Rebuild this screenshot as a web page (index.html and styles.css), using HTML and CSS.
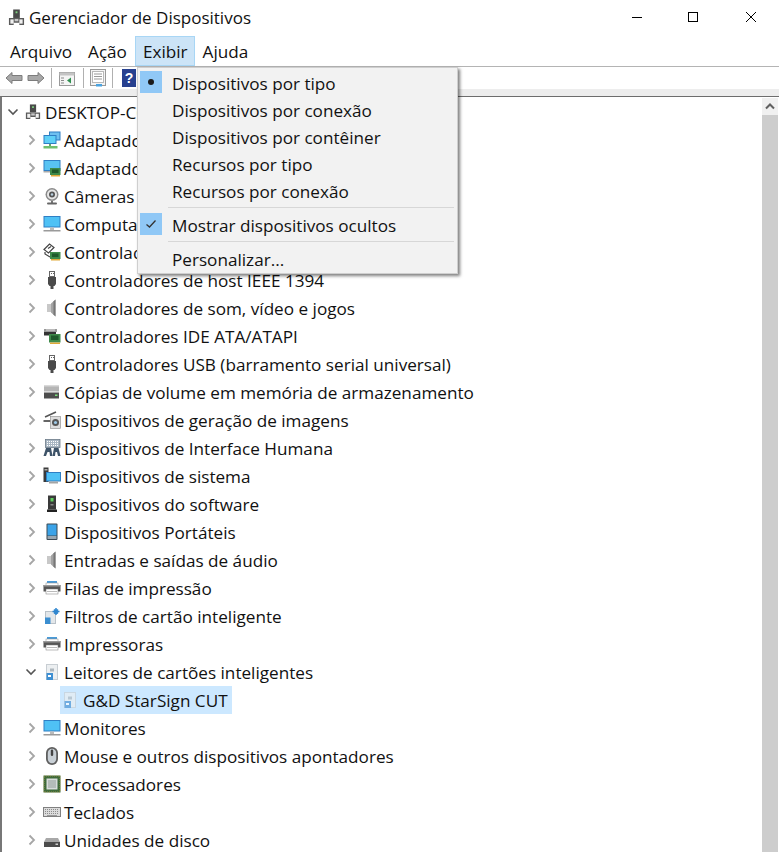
FILE: index.html
```html
<!DOCTYPE html>
<html lang="pt-BR">
<head>
<meta charset="utf-8">
<title>Gerenciador de Dispositivos</title>
<link rel="stylesheet" href="styles.css">
</head>
<body>
<svg class="defs" width="0" height="0" aria-hidden="true">
  <defs>
    <symbol id="i-pc" viewBox="0 0 18 18"><rect x="5.500" y="0.500" width="7" height="9" fill="#4a4a4a"/><rect x="8" y="2.500" width="2" height="2" fill="#7fd07f"/><path d="M1 9.500H17V17H12V14.500H6V17H1Z" fill="#5a5a5a"/><rect x="2.500" y="11" width="3.500" height="4.500" fill="#f0f0f0"/><rect x="12" y="11" width="3.500" height="4.500" fill="#f0f0f0"/><rect x="7" y="10.500" width="4" height="2.500" fill="#c8c8c8"/></symbol>
    <symbol id="i-net" viewBox="0 0 18 18"><rect x="6" y="0.500" width="11.500" height="9" fill="#2f7fc4"/><rect x="7" y="1.500" width="9.500" height="7" fill="#6fc0f0"/><rect x="0.500" y="4" width="13" height="9" fill="#2f7fc4"/><rect x="1.500" y="5" width="11" height="7" fill="#5fd0f7"/><rect x="6" y="13" width="2" height="2" fill="#6aa86a"/><rect x="0.500" y="15" width="14" height="2.500" fill="#6fbf6f"/></symbol>
    <symbol id="i-video" viewBox="0 0 18 18"><rect x="0.500" y="1" width="17" height="11" fill="#2f7fc4"/><rect x="1.500" y="2" width="15" height="9" fill="#58c3f2"/><rect x="0.500" y="12" width="9" height="1.500" fill="#aaa"/><rect x="7" y="9" width="10.500" height="7" fill="#3f8a4a"/><rect x="9" y="10.500" width="6.500" height="3.500" fill="#1f5a2b"/><rect x="8" y="16" width="9" height="1.500" fill="#e0a93a"/></symbol>
    <symbol id="i-cam" viewBox="0 0 18 18"><circle cx="9" cy="7.500" r="6.500" fill="#8a8a8a"/><circle cx="9" cy="7.500" r="5" fill="#e6e6e6"/><circle cx="9" cy="7.500" r="3" fill="#555"/><circle cx="9" cy="7.500" r="1.200" fill="#b8d0e0"/><rect x="8" y="14" width="2" height="2" fill="#777"/><rect x="4" y="15.500" width="10" height="2" rx="1" fill="#666"/></symbol>
    <symbol id="i-mon" viewBox="0 0 18 18"><rect x="0.500" y="1" width="17" height="11.500" fill="#2f7fc4"/><rect x="1.500" y="2" width="15" height="9.500" fill="#4fc1f5"/><rect x="7" y="12.500" width="4" height="2.500" fill="#bbb"/><rect x="0.500" y="15" width="17" height="1.500" fill="#9a9a9a"/></symbol>
    <symbol id="i-stor" viewBox="0 0 18 18"><path d="M1 6.500 L6.500 1 L11 4.500 L5.500 10Z" fill="#fff" stroke="#444" stroke-width="1.200"/><path d="M2 9 L2 11 L7 14 M5 5.500 L8 3.500" fill="none" stroke="#444" stroke-width="1.200"/><rect x="7" y="9" width="10.500" height="7" fill="#3f8a4a"/><rect x="9" y="10.500" width="6.500" height="3.500" fill="#1f5a2b"/><rect x="8" y="16" width="9" height="1.500" fill="#e0a93a"/></symbol>
    <symbol id="i-usb" viewBox="0 0 18 18"><rect x="6.500" y="0.500" width="5" height="5" fill="#fff" stroke="#666"/><rect x="8" y="2" width="1" height="1" fill="#666"/><rect x="10" y="2" width="1" height="1" fill="#666"/><path d="M5 6H13V13L11.500 15H10.500V18H7.500V15H6.500L5 13Z" fill="#4a4a4a"/></symbol>
    <symbol id="i-snd" viewBox="0 0 18 18"><rect x="4" y="5" width="4" height="8" fill="#c8c8c8"/><path d="M8 4.500 L12.500 0.500 V17.500 L8 13.500Z" fill="#a4a4a4"/><path d="M10.500 2.500 L12.500 0.500 V17.500 L10.500 15.500Z" fill="#777"/></symbol>
    <symbol id="i-ide" viewBox="0 0 18 18"><path d="M1 2H14V5H1Z" fill="#999"/><path d="M1 5H13V8.500H1Z" fill="#333"/><rect x="3" y="2.500" width="9" height="1" fill="#ddd"/><rect x="6" y="7" width="11.500" height="8.500" fill="#3f8a4a"/><rect x="8" y="8.500" width="7.500" height="4.500" fill="#1f5a2b"/><rect x="7" y="15.500" width="10" height="1.500" fill="#e0a93a"/></symbol>
    <symbol id="i-vol" viewBox="0 0 18 18"><rect x="1" y="2.500" width="15" height="6" fill="#b5b5b5"/><rect x="1" y="2.500" width="15" height="1" fill="#d8d8d8"/><rect x="1" y="9.500" width="15" height="6" fill="#4d4d4d"/><rect x="12" y="11.500" width="2.500" height="1.500" fill="#7be07b"/></symbol>
    <symbol id="i-img" viewBox="0 0 18 18"><path d="M2 6 L13 1" stroke="#555" stroke-width="1.600"/><rect x="0.500" y="9" width="7" height="2" fill="#666"/><rect x="7.500" y="5.500" width="10" height="12" fill="#ddd" stroke="#888" stroke-width="0.600"/><circle cx="12.500" cy="11.500" r="3.500" fill="#555"/><circle cx="12.500" cy="11.500" r="1.600" fill="#9cc8e6"/></symbol>
    <symbol id="i-hid" viewBox="0 0 18 18"><rect x="2.500" y="0.500" width="14.500" height="8" fill="#a9b6c2" stroke="#6b7a88" stroke-width="0.800"/><path d="M4 2.500H16M4 4.500H16M4 6.500H16" stroke="#fff" stroke-dasharray="1 1"/><path d="M0.500 17 L3 9 H8 L9.500 17 H7 L6.500 13 H4.500 L3 17Z" fill="#3e5368"/><path d="M9.500 17 L11 9 H15.500 L17.500 17 H15 L14 13 H12.500 L12 17Z" fill="#3e5368"/></symbol>
    <symbol id="i-sys" viewBox="0 0 18 18"><rect x="0.500" y="0.500" width="5" height="14.500" fill="#3a3a3a"/><rect x="1.500" y="2" width="3" height="1.500" fill="#aaa"/><rect x="3" y="5" width="15" height="9.500" fill="#2f7fc4"/><rect x="4" y="6" width="13" height="7.500" fill="#4fc1f5"/><rect x="6" y="14.500" width="9" height="2" fill="#a5a5a5"/></symbol>
    <symbol id="i-soft" viewBox="0 0 18 18"><rect x="5" y="0.500" width="8" height="14" fill="#3a3a3a"/><rect x="7.500" y="3" width="3" height="3.500" fill="#5fcf5f"/><rect x="7.500" y="9" width="3" height="1.500" fill="#888"/><rect x="4" y="14.500" width="10" height="2.500" fill="#222"/></symbol>
    <symbol id="i-port" viewBox="0 0 18 18"><rect x="3.500" y="0.500" width="11" height="16.500" rx="1" fill="#3c4a55"/><rect x="4.500" y="1.500" width="9" height="11" fill="#3ba3e8"/><rect x="4.500" y="13" width="9" height="3" fill="#98a6b0"/></symbol>
    <symbol id="i-prn" viewBox="0 0 18 18"><rect x="4" y="2" width="10" height="2" fill="#4a9bd8"/><rect x="3" y="4" width="12" height="3" fill="#fff" stroke="#888" stroke-width="0.500"/><rect x="0.500" y="6" width="17" height="6.500" fill="#555"/><rect x="0.500" y="6" width="17" height="1.500" fill="#999"/><rect x="3" y="10" width="12" height="5" fill="#fff" stroke="#777" stroke-width="0.500"/><rect x="4" y="12" width="10" height="1" fill="#bbb"/></symbol>
    <symbol id="i-filt" viewBox="0 0 18 18"><rect x="2" y="4" width="11" height="13" fill="#b9c1c8"/><rect x="3" y="5" width="9" height="11" fill="#e3e7ea"/><rect x="2" y="10.500" width="5.500" height="6.500" fill="#3b8ed0"/><path d="M13 1V8M9.500 4.500H16.500M11 2.500L15 6.500M15 2.500L11 6.500" stroke="#2f86cf" stroke-width="1.500"/></symbol>
    <symbol id="i-card" viewBox="0 0 18 18"><rect x="3" y="1" width="12" height="16" fill="#c8ced3"/><rect x="4" y="2" width="10" height="14" fill="#eceff1"/><rect x="7" y="5.500" width="4" height="3" fill="#aeb7be"/><rect x="3.500" y="10" width="6.500" height="7" fill="#3f8fd2"/><rect x="5" y="12" width="3" height="2" fill="#fff"/></symbol>
    <symbol id="i-mouse" viewBox="0 0 18 18"><rect x="3" y="0" width="12" height="18" rx="6" fill="#5f5f5f"/><rect x="4.800" y="1.800" width="8.400" height="14.400" rx="4.200" fill="#c9d0d6"/><rect x="7.800" y="2.500" width="2.400" height="6.500" rx="1.200" fill="#444"/></symbol>
    <symbol id="i-cpu" viewBox="0 0 18 18"><rect x="0.500" y="0.500" width="17" height="17" fill="#3f6b3a"/><rect x="1" y="1" width="16" height="16" fill="none" stroke="#c8a550" stroke-dasharray="1 1" stroke-width="0.600"/><rect x="3.500" y="3.500" width="11" height="11" fill="#d7dcdb"/><rect x="5" y="5" width="8" height="8" fill="#b4bcb9"/></symbol>
    <symbol id="i-kbd" viewBox="0 0 18 18"><rect x="0.500" y="4.500" width="17" height="9" fill="#dcdcdc" stroke="#808080"/><path d="M2 6.500H16M2 8.500H16M2 10.500H16" stroke="#8c8c8c" stroke-dasharray="1 1"/><rect x="4" y="12" width="10" height="1" fill="#9a9a9a"/></symbol>
    <symbol id="i-disk" viewBox="0 0 18 18"><path d="M3 7H15L17 11H1Z" fill="#a8a8a8"/><rect x="1" y="11" width="16" height="5" fill="#4c4c4c"/><rect x="12.500" y="12.500" width="2.500" height="1.500" fill="#cfcfcf"/></symbol>
    <symbol id="i-chev-r" viewBox="0 0 10 12"><path d="M2.500 1.500L7 6L2.500 10.500" fill="none" stroke="#a6a6a6" stroke-width="1.800"/></symbol>
    <symbol id="i-chev-d" viewBox="0 0 12 10"><path d="M1.500 2.500L6 7L10.500 2.500" fill="none" stroke="#555" stroke-width="1.600"/></symbol>
  </defs>
</svg>

<div class="window">
  <header class="titlebar">
    <svg class="title-icon"><use href="#i-pc"/></svg>
    <span class="title-text">Gerenciador de Dispositivos</span>
    <div class="win-buttons">
      <svg class="win-btn" viewBox="0 0 10 10"><path d="M0 5.500H10" stroke="#000" fill="none"/></svg>
      <svg class="win-btn" viewBox="0 0 10 10"><rect x="0.500" y="0.500" width="9" height="9" stroke="#000" fill="none"/></svg>
      <svg class="win-btn" viewBox="0 0 10 10"><path d="M0 0L10 10M10 0L0 10" stroke="#000" fill="none"/></svg>
    </div>
  </header>

  <nav class="menubar">
    <span class="menu-item">Arquivo</span>
    <span class="menu-item">Ação</span>
    <span class="menu-item is-open">Exibir</span>
    <span class="menu-item">Ajuda</span>
  </nav>

  <div class="toolbar">
    <svg class="tool tool-arrow" viewBox="0 0 18 14"><path d="M1 7L7 1.500V4.500H17V9.500H7V12.500Z" fill="#a8a8a8" stroke="#7c7c7c"/></svg>
    <svg class="tool tool-arrow tool-next" viewBox="0 0 18 14"><path d="M17 7L11 1.500V4.500H1V9.500H11V12.500Z" fill="#a8a8a8" stroke="#7c7c7c"/></svg>
    <span class="tool-sep sep-a"></span>
    <svg class="tool tool-pane" viewBox="0 0 16 14"><rect x="0.500" y="0.500" width="15" height="13" fill="#f4f4f4" stroke="#9a9a9a"/><rect x="0.500" y="0.500" width="15" height="3" fill="#c4c4c4"/><path d="M2 6H5M2 8.500H5M2 11H5" stroke="#8a8a8a"/><path d="M12 5.500V11.500L8 8.500Z" fill="#2f8f4f"/></svg>
    <span class="tool-sep sep-b"></span>
    <svg class="tool tool-sheet" viewBox="0 0 16 18"><rect x="0.500" y="0.500" width="15" height="16" fill="#f4f4f4" stroke="#9a9a9a"/><rect x="2.500" y="2.500" width="11" height="11" fill="#fff" stroke="#b8b8b8"/><path d="M4 5H12M4 7.500H12M4 10H12" stroke="#999"/><rect x="6" y="15" width="6" height="2.500" fill="#4aa3e0"/></svg>
    <span class="tool-sep sep-c"></span>
    <span class="tool-help">?</span>
  </div>

  <div class="content">
    <ul class="tree">
      <li class="row root"><svg class="chev-d"><use href="#i-chev-d"/></svg><svg class="icon"><use href="#i-pc"/></svg><span>DESKTOP-CGH0R1P</span></li>
      <li class="row"><svg class="chev"><use href="#i-chev-r"/></svg><svg class="icon"><use href="#i-net"/></svg><span>Adaptadores de rede</span></li>
      <li class="row"><svg class="chev"><use href="#i-chev-r"/></svg><svg class="icon"><use href="#i-video"/></svg><span>Adaptadores de vídeo</span></li>
      <li class="row"><svg class="chev"><use href="#i-chev-r"/></svg><svg class="icon"><use href="#i-cam"/></svg><span>Câmeras</span></li>
      <li class="row"><svg class="chev"><use href="#i-chev-r"/></svg><svg class="icon"><use href="#i-mon"/></svg><span>Computador</span></li>
      <li class="row"><svg class="chev"><use href="#i-chev-r"/></svg><svg class="icon"><use href="#i-stor"/></svg><span>Controladores de armazenamento</span></li>
      <li class="row"><svg class="chev"><use href="#i-chev-r"/></svg><svg class="icon"><use href="#i-usb"/></svg><span>Controladores de host IEEE 1394</span></li>
      <li class="row"><svg class="chev"><use href="#i-chev-r"/></svg><svg class="icon"><use href="#i-snd"/></svg><span>Controladores de som, vídeo e jogos</span></li>
      <li class="row"><svg class="chev"><use href="#i-chev-r"/></svg><svg class="icon"><use href="#i-ide"/></svg><span>Controladores IDE ATA/ATAPI</span></li>
      <li class="row"><svg class="chev"><use href="#i-chev-r"/></svg><svg class="icon"><use href="#i-usb"/></svg><span>Controladores USB (barramento serial universal)</span></li>
      <li class="row"><svg class="chev"><use href="#i-chev-r"/></svg><svg class="icon"><use href="#i-vol"/></svg><span>Cópias de volume em memória de armazenamento</span></li>
      <li class="row"><svg class="chev"><use href="#i-chev-r"/></svg><svg class="icon"><use href="#i-img"/></svg><span>Dispositivos de geração de imagens</span></li>
      <li class="row"><svg class="chev"><use href="#i-chev-r"/></svg><svg class="icon"><use href="#i-hid"/></svg><span>Dispositivos de Interface Humana</span></li>
      <li class="row"><svg class="chev"><use href="#i-chev-r"/></svg><svg class="icon"><use href="#i-sys"/></svg><span>Dispositivos de sistema</span></li>
      <li class="row"><svg class="chev"><use href="#i-chev-r"/></svg><svg class="icon"><use href="#i-soft"/></svg><span>Dispositivos do software</span></li>
      <li class="row"><svg class="chev"><use href="#i-chev-r"/></svg><svg class="icon"><use href="#i-port"/></svg><span>Dispositivos Portáteis</span></li>
      <li class="row"><svg class="chev"><use href="#i-chev-r"/></svg><svg class="icon"><use href="#i-snd"/></svg><span>Entradas e saídas de áudio</span></li>
      <li class="row"><svg class="chev"><use href="#i-chev-r"/></svg><svg class="icon"><use href="#i-prn"/></svg><span>Filas de impressão</span></li>
      <li class="row"><svg class="chev"><use href="#i-chev-r"/></svg><svg class="icon"><use href="#i-filt"/></svg><span>Filtros de cartão inteligente</span></li>
      <li class="row"><svg class="chev"><use href="#i-chev-r"/></svg><svg class="icon"><use href="#i-prn"/></svg><span>Impressoras</span></li>
      <li class="row"><svg class="chev-d"><use href="#i-chev-d"/></svg><svg class="icon"><use href="#i-card"/></svg><span>Leitores de cartões inteligentes</span></li>
      <li class="row child"><span class="selection"><svg class="icon icon-faded"><use href="#i-card"/></svg><span>G&amp;D StarSign CUT</span></span></li>
      <li class="row"><svg class="chev"><use href="#i-chev-r"/></svg><svg class="icon"><use href="#i-mon"/></svg><span>Monitores</span></li>
      <li class="row"><svg class="chev"><use href="#i-chev-r"/></svg><svg class="icon"><use href="#i-mouse"/></svg><span>Mouse e outros dispositivos apontadores</span></li>
      <li class="row"><svg class="chev"><use href="#i-chev-r"/></svg><svg class="icon"><use href="#i-cpu"/></svg><span>Processadores</span></li>
      <li class="row"><svg class="chev"><use href="#i-chev-r"/></svg><svg class="icon"><use href="#i-kbd"/></svg><span>Teclados</span></li>
      <li class="row"><svg class="chev"><use href="#i-chev-r"/></svg><svg class="icon"><use href="#i-disk"/></svg><span>Unidades de disco</span></li>
    </ul>
    <div class="scrollbar">
      <svg class="scroll-up" viewBox="0 0 10 8"><path d="M1 6L5 2L9 6" fill="none" stroke="#606060" stroke-width="2"/></svg>
      <div class="scroll-thumb"></div>
    </div>
  </div>

  <div class="dropdown">
    <div class="dd-item"><span class="dd-mark"><span class="dd-dot"></span></span>Dispositivos por tipo</div>
    <div class="dd-item"><span class="dd-mark-empty"></span>Dispositivos por conexão</div>
    <div class="dd-item"><span class="dd-mark-empty"></span>Dispositivos por contêiner</div>
    <div class="dd-item"><span class="dd-mark-empty"></span>Recursos por tipo</div>
    <div class="dd-item"><span class="dd-mark-empty"></span>Recursos por conexão</div>
    <div class="dd-sep"></div>
    <div class="dd-item"><span class="dd-mark"><svg class="dd-check" viewBox="0 0 12 10"><path d="M1.500 5.500L4.500 8L10.500 1.500" fill="none" stroke="#333" stroke-width="1.300"/></svg></span>Mostrar dispositivos ocultos</div>
    <div class="dd-sep"></div>
    <div class="dd-item"><span class="dd-mark-empty"></span>Personalizar...</div>
  </div>
</div>
</body>
</html>
```

FILE: styles.css
```css
* { box-sizing: border-box; }
html, body { margin: 0; padding: 0; height: 100%; overflow: hidden; background: #fff; }
body { font-family: "Open Sans", "Noto Sans", sans-serif; font-size: 17.15px; color: #111; }
.defs { position: absolute; }
.window { position: relative; display: flex; flex-direction: column; width: 779px; height: 852px; overflow: hidden; }

.titlebar { display: flex; align-items: center; height: 36px; flex: none; padding: 0 23px 2px 8px; }
.title-icon { width: 17px; height: 17px; margin-right: 4px; }
.title-text { font-size: 17px; }
.win-buttons { margin-left: auto; display: flex; gap: 46px; }
.win-buttons .win-btn:last-child { margin-left: 2px; }
.win-btn { width: 10px; height: 10px; display: block; }

.menubar { display: flex; height: 31px; flex: none; align-items: flex-start; border-bottom: 1px solid #b4b4b4; padding-left: 2px; }
.menu-item { display: flex; align-items: center; padding: 0 7px; border: 1px solid transparent; height: 30px; }
.menu-item.is-open { background: #cce4f7; border-color: #a8d6f5; padding-right: 6px; }

.toolbar { display: flex; align-items: center; height: 29px; flex: none; padding-left: 5px; background: #fff; border-bottom: 7px solid #ededed; }
.tool { display: block; flex: none; }
.tool-arrow { width: 18px; height: 14px; }
.tool-next { margin-left: 4px; }
.tool-pane { width: 16px; height: 14px; margin-top: 2px; }
.tool-sheet { width: 16px; height: 18px; }
.tool-sep { width: 1px; height: 20px; background: #b0b0b0; flex: none; }
.sep-a { margin: 0 7px 0 6px; }
.sep-b { margin: 0 6px 0 8px; }
.sep-c { margin: 0 9px 0 6px; }
.tool-help { display: block; flex: none; width: 14px; height: 18px; background: #27408f; color: #fff; font: bold 14px/18px "Liberation Sans", sans-serif; text-align: center; }

.content { flex: 1; min-height: 0; display: flex; border-top: 1px solid #6d6d6d; border-left: 2px solid #777; padding-top: 1px; overflow: hidden; }
.tree { list-style: none; margin: 0; padding: 0; flex: 1; min-width: 0; }
.row { display: flex; align-items: center; height: 28px; padding-left: 25px; white-space: nowrap; }
.chev { width: 10px; height: 12px; margin-right: 6px; flex: none; }
.chev-d { width: 12px; height: 10px; margin-left: -2px; margin-right: 6px; flex: none; }
.icon { width: 18px; height: 18px; margin-right: 3px; flex: none; }
.icon-faded { opacity: .65; }
.row.root { padding-left: 5px; }
.row.root .chev-d { margin-left: 0; margin-right: 6px; }
.row.root .icon { width: 16px; height: 16px; margin-right: 4px; }
.row.child { padding-left: 58px; }
.selection { display: flex; align-items: center; height: 28px; background: #cce8ff; padding: 0 4px 0 1px; }
.selection .icon { margin-right: 4px; }

.scrollbar { width: 16px; margin: 0 1px 0 0; background: #f0f0f0; flex: none; display: flex; flex-direction: column; }
.scroll-up { width: 16px; height: 17px; padding: 4px 3px; flex: none; }
.scroll-thumb { flex: 1; background: #cdcdcd; }

.dropdown { position: absolute; left: 137px; top: 67px; width: 321px; height: 207px; background: #f2f2f2; border: 1px solid #cfcfcf; padding-top: 2px; box-shadow: 2px 2px 3px rgba(0,0,0,.5); }
.dd-item { display: flex; align-items: center; height: 27px; padding-bottom: 1px; }
.dd-mark, .dd-mark-empty { width: 22px; height: 22px; margin: 0 10px 2px 2px; flex: none; display: flex; align-items: center; justify-content: center; }
.dd-mark { background: #90c8f6; }
.dd-dot { width: 6px; height: 6px; border-radius: 50%; background: #1a1a1a; }
.dd-check { width: 12px; height: 10px; }
.dd-sep { height: 1px; margin: 2px 3px 4px 30px; background: #d7d7d7; }
```
